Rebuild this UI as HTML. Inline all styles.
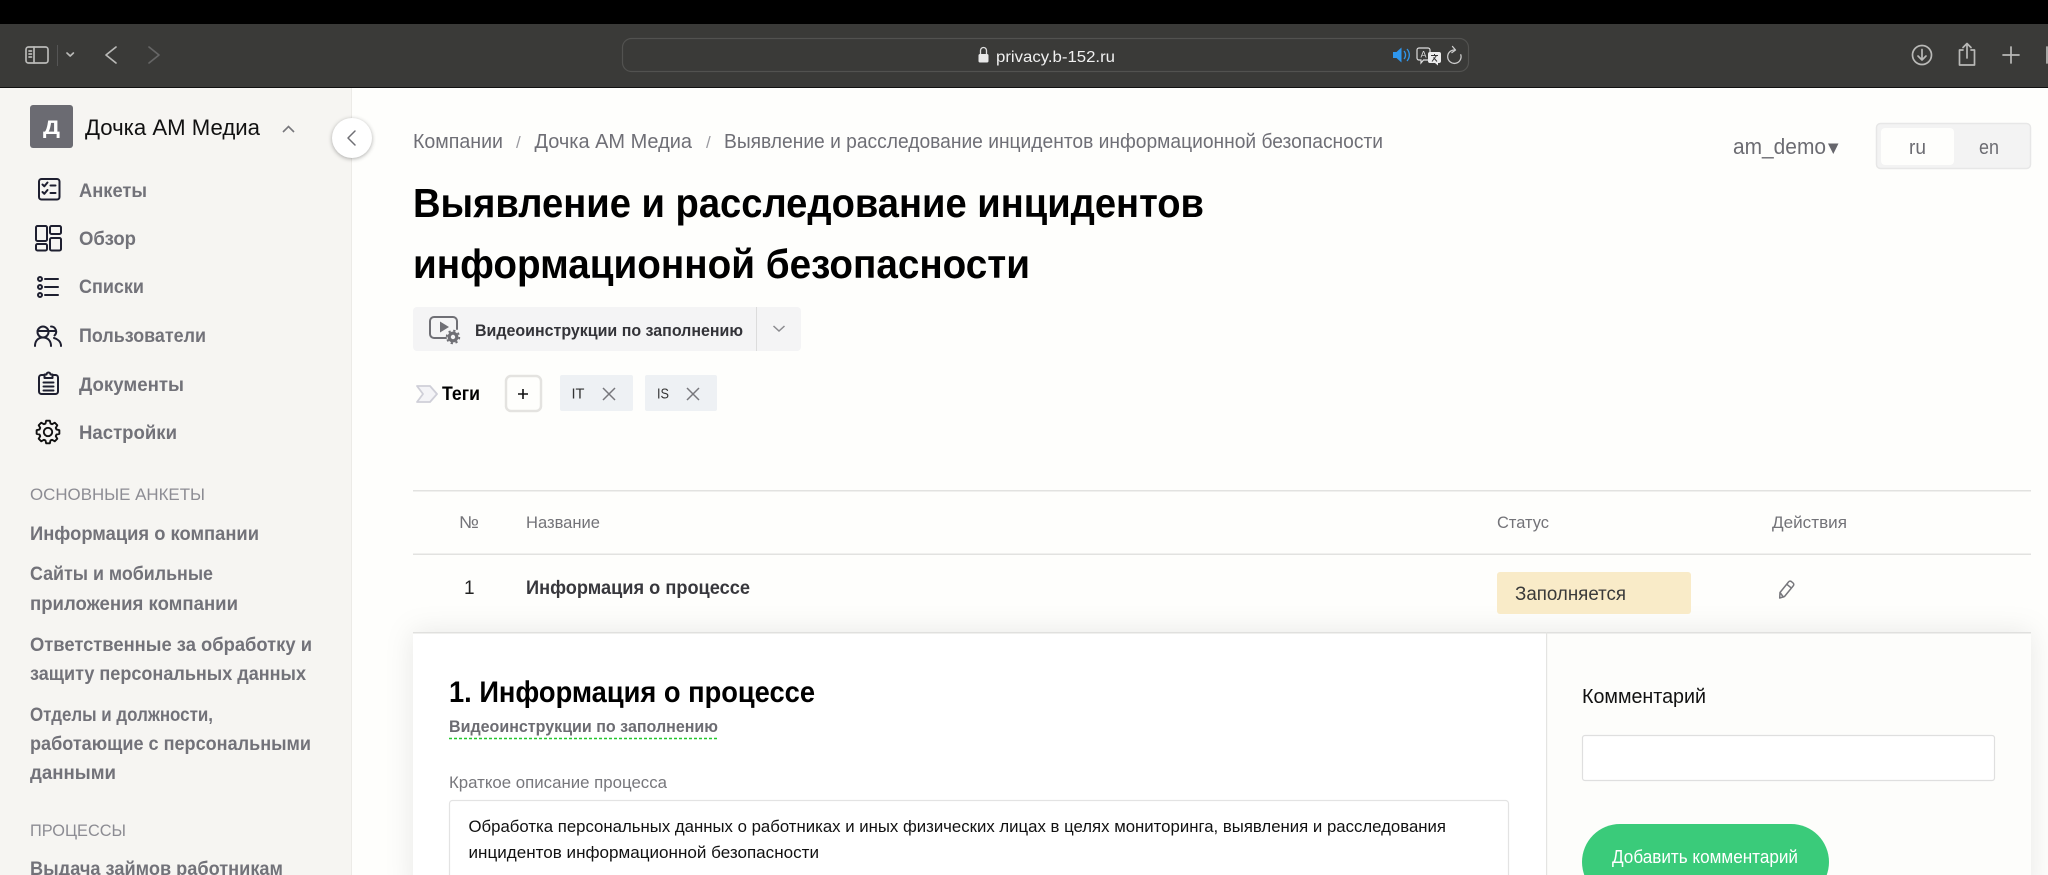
<!DOCTYPE html>
<html lang="ru">
<head>
<meta charset="utf-8">
<title>Выявление и расследование инцидентов информационной безопасности</title>
<style>
html,body{margin:0;padding:0;width:2048px;height:875px;overflow:hidden;background:#fefefc}
svg{display:block}
text{font-family:"Liberation Sans",sans-serif}
.nav{font-size:19px;font-weight:700;fill:#727279}
.side{font-size:19px;font-weight:700;fill:#727279}
.sec{font-size:17px;fill:#8c8c93}
.crumb{font-size:20px;fill:#6f6f76}
.h1{font-size:41px;font-weight:700;fill:#000}
.th{font-size:17px;fill:#737378}
.ic{fill:none;stroke:#1e1f30;stroke-width:2;stroke-linecap:round;stroke-linejoin:round}
.tb{fill:none;stroke:#b9b9b7;stroke-width:1.7;stroke-linecap:round;stroke-linejoin:round}
</style>
</head>
<body>
<svg width="2048" height="875" viewBox="0 0 2048 875" xmlns="http://www.w3.org/2000/svg">
  <rect width="2048" height="875" fill="#fefefc"/>

  <!-- browser chrome -->
  <rect width="2048" height="24" fill="#000"/>
  <rect y="24" width="2048" height="63" fill="#3a3a38"/>
  <rect y="87" width="2048" height="1" fill="#111"/>

  <rect x="26" y="47" width="22" height="16" rx="2.500" class="tb"/>
  <path d="M34 47V63M29 51h2.500M29 54h2.500M29 57h2.500" class="tb" stroke-width="1.200"/>
  <path d="M57.500 45V66" stroke="#555" stroke-width="1"/>
  <path d="M67 53l3.200 3 3.200-3" class="tb" stroke="#ddd" stroke-width="1.800"/>
  <path d="M116 47l-10 8 10 8" class="tb"/>
  <path d="M149 47l10 8-10 8" fill="none" stroke="#666" stroke-width="1.700" stroke-linecap="round" stroke-linejoin="round"/>

  <rect x="622.500" y="38.500" width="846" height="33" rx="9" fill="#3a3a38" stroke="#525250" stroke-width="1.200"/>
  <path d="M980.500 54v-3.500a3 3 0 0 1 6 0V54" fill="none" stroke="#ddd" stroke-width="1.300"/>
  <rect x="978.500" y="54" width="10" height="8.500" rx="1.500" fill="#e8e8e8"/>
  <text x="996" y="62" font-size="16" fill="#f0f0f0" textLength="119" lengthAdjust="spacingAndGlyphs">privacy.b-152.ru</text>
  <path d="M1393 52h3.500l5-4.500v15l-5-4.500H1393z" fill="#2f97ee"/>
  <path d="M1404 51a6 6 0 0 1 0 8M1407 49a9 9 0 0 1 0 12" fill="none" stroke="#2f97ee" stroke-width="1.300"/>

  <path d="M1419 48h9a2 2 0 0 1 2 2v8a2 2 0 0 1-2 2h-4.500l-2.500 3v-3h-2a2 2 0 0 1-2-2v-8a2 2 0 0 1 2-2z" fill="#3a3a38" stroke="#ddd" stroke-width="1.200"/>
  <text x="1420.500" y="57.500" font-size="9" fill="#ddd">A</text>
  <path d="M1430 52h9a2 2 0 0 1 2 2v7a2 2 0 0 1-2 2h-1v2.500l-3-2.500h-5a2 2 0 0 1-2-2v-7a2 2 0 0 1 2-2z" fill="#ececec"/>
  <path d="M1431 55.500h7M1434.500 54v1.500M1432 61.500l4.500-6M1433.500 57.500l3.500 4" stroke="#333" stroke-width="1" fill="none"/>

  <path d="M1454.500 50a6.700 6.700 0 1 0 6.300 4.800" fill="none" stroke="#ccc" stroke-width="1.300" stroke-linecap="round"/>
  <path d="M1452.500 46.500l3 3.500-3.600 2.600" fill="none" stroke="#ccc" stroke-width="1.300" stroke-linecap="round" stroke-linejoin="round"/>

  <circle cx="1922" cy="55" r="9.500" class="tb"/>
  <path d="M1922 49.500v10M1918 56l4 4 4-4" class="tb"/>
  <path d="M1963 50h-3.500v15h15V50H1971M1967 58V44M1963 47.500l4-4 4 4" class="tb"/>
  <path d="M2011 47v16M2003 55h16" class="tb"/>
  <path d="M2047 47v16" class="tb"/>

  <!-- sidebar -->
  <rect y="88" width="351" height="787" fill="#f6f5f2"/>
  <rect x="351" y="88" width="1" height="787" fill="#ecebe7"/>
  <rect x="30" y="105" width="43" height="43" rx="3" fill="#6b6b72"/>
  <text x="43" y="134" font-size="19" font-weight="700" fill="#fff" textLength="17" lengthAdjust="spacingAndGlyphs">Д</text>
  <text x="85" y="135" font-size="22" fill="#111" textLength="175" lengthAdjust="spacingAndGlyphs">Дочка АМ Медиа</text>
  <path d="M283 132l5.500-5.500 5.500 5.500" fill="none" stroke="#77777c" stroke-width="1.600"/>

  <circle cx="352" cy="138" r="20" fill="#fff" style="filter:drop-shadow(0 1.500px 2px rgba(0,0,0,.32))"/>
  <path d="M355 131l-7 7 7 7" fill="none" stroke="#6f6f75" stroke-width="1.500" stroke-linecap="round" stroke-linejoin="round"/>

  <!-- nav icons -->
  <rect x="39" y="179" width="20.500" height="20.500" rx="2.500" class="ic"/>
  <path d="M42.500 184.500l1.800 1.800 3.200-3.800M42.500 192l1.800 1.800 3.200-3.800M50.500 185.500h5M50.500 193h5" class="ic" stroke-width="1.500"/>

  <rect x="36" y="226" width="11" height="15" rx="1.500" class="ic"/>
  <rect x="50" y="226" width="11" height="8" rx="1.500" class="ic"/>
  <rect x="50" y="238" width="11" height="12.500" rx="1.500" class="ic"/>
  <rect x="36" y="244" width="11" height="6.500" rx="1.500" class="ic"/>

  <circle cx="40" cy="279" r="2" class="ic" stroke-width="1.500"/>
  <circle cx="40" cy="287" r="2" class="ic" stroke-width="1.500"/>
  <circle cx="40" cy="295" r="2" class="ic" stroke-width="1.500"/>
  <path d="M45 279h13M45 287h13M45 295h13" class="ic"/>

  <circle cx="43" cy="332" r="5.500" class="ic" stroke-width="1.800"/>
  <path d="M37.500 331h11M35 346c0-5.500 3.500-8.500 8-8.500s8 3 8 8.500" class="ic" stroke-width="1.800"/>
  <path d="M51 326.500a5.200 5.200 0 0 1 3.500 9M49.500 331h6M54 338c3.500 1 7 3.500 7 8" class="ic" stroke-width="1.800"/>

  <path d="M44.500 375h-3a2.500 2.500 0 0 0-2.500 2.500v14a2.500 2.500 0 0 0 2.500 2.500h14a2.500 2.500 0 0 0 2.500-2.500v-14a2.500 2.500 0 0 0-2.500-2.500h-3" class="ic"/>
  <path d="M44.500 378v-3.500h2a2 2 0 0 1 4 0h2v3.500z" class="ic" stroke-width="1.700"/>
  <path d="M43.500 382.500h10M43.500 386.500h10M43.500 390.500h10" class="ic" stroke-width="1.800"/>

  <g transform="translate(48 432)">
    <path d="M-2.570-8.420L-1.800-11.360 1.800-11.360 2.570-8.420 4.140-7.770 6.760-9.310 9.310-6.760 7.770-4.140 8.420-2.570 11.360-1.800 11.360 1.800 8.420 2.570 7.770 4.140 9.310 6.760 6.760 9.310 4.140 7.770 2.570 8.420 1.800 11.360-1.800 11.360-2.570 8.420-4.140 7.770-6.760 9.310-9.310 6.760-7.770 4.140-8.420 2.570-11.360 1.800-11.360-1.800-8.420-2.570-7.770-4.140-9.310-6.760-6.760-9.310-4.140-7.770Z" fill="none" stroke="#111" stroke-width="1.900" stroke-linejoin="round"/>
    <circle r="4.200" fill="none" stroke="#111" stroke-width="1.900"/>
  </g>

  <!-- nav text -->
  <text x="79" y="197" class="nav" textLength="68" lengthAdjust="spacingAndGlyphs">Анкеты</text>
  <text x="79" y="245" class="nav" textLength="57" lengthAdjust="spacingAndGlyphs">Обзор</text>
  <text x="79" y="293" class="nav" textLength="65" lengthAdjust="spacingAndGlyphs">Списки</text>
  <text x="79" y="342" class="nav" textLength="127" lengthAdjust="spacingAndGlyphs">Пользователи</text>
  <text x="79" y="391" class="nav" textLength="105" lengthAdjust="spacingAndGlyphs">Документы</text>
  <text x="79" y="439" class="nav" textLength="98" lengthAdjust="spacingAndGlyphs">Настройки</text>

  <text x="30" y="500" class="sec" textLength="175" lengthAdjust="spacingAndGlyphs">ОСНОВНЫЕ АНКЕТЫ</text>
  <text x="30" y="540" class="side" textLength="229" lengthAdjust="spacingAndGlyphs">Информация о компании</text>
  <text x="30" y="580" class="side" textLength="183" lengthAdjust="spacingAndGlyphs">Сайты и мобильные</text>
  <text x="30" y="610" class="side" textLength="208" lengthAdjust="spacingAndGlyphs">приложения компании</text>
  <text x="30" y="651" class="side" textLength="282" lengthAdjust="spacingAndGlyphs">Ответственные за обработку и</text>
  <text x="30" y="680" class="side" textLength="276" lengthAdjust="spacingAndGlyphs">защиту персональных данных</text>
  <text x="30" y="721" class="side" textLength="183" lengthAdjust="spacingAndGlyphs">Отделы и должности,</text>
  <text x="30" y="750" class="side" textLength="281" lengthAdjust="spacingAndGlyphs">работающие с персональными</text>
  <text x="30" y="779" class="side" textLength="86" lengthAdjust="spacingAndGlyphs">данными</text>
  <text x="30" y="836" class="sec" textLength="96" lengthAdjust="spacingAndGlyphs">ПРОЦЕССЫ</text>
  <text x="30" y="875" class="side" textLength="253" lengthAdjust="spacingAndGlyphs">Выдача займов работникам</text>

  <!-- header -->
  <text x="413" y="148" class="crumb" textLength="90" lengthAdjust="spacingAndGlyphs">Компании</text>
  <text x="516" y="148" font-size="17" fill="#9a9aa0">/</text>
  <text x="534.500" y="148" class="crumb" textLength="157.500" lengthAdjust="spacingAndGlyphs">Дочка АМ Медиа</text>
  <text x="706" y="148" font-size="17" fill="#9a9aa0">/</text>
  <text x="724" y="148" class="crumb" textLength="659" lengthAdjust="spacingAndGlyphs">Выявление и расследование инцидентов информационной безопасности</text>

  <text x="1733" y="154" font-size="22" fill="#6c6c72" textLength="93" lengthAdjust="spacingAndGlyphs">am_demo</text>
  <path d="M1828 143.500h10.500l-5.200 10.500z" fill="#66666c"/>
  <rect x="1876.500" y="123.500" width="154" height="45" rx="4" fill="#f3f3f3" stroke="#e7e7e7" stroke-width="1.500"/>
  <rect x="1881" y="128" width="73" height="37" rx="4" fill="#fefefc"/>
  <text x="1909" y="154" font-size="20" fill="#6c6c72" textLength="17" lengthAdjust="spacingAndGlyphs">ru</text>
  <text x="1979" y="154" font-size="20" fill="#6c6c72" textLength="20" lengthAdjust="spacingAndGlyphs">en</text>

  <text x="413" y="217" class="h1" textLength="791" lengthAdjust="spacingAndGlyphs">Выявление и расследование инцидентов</text>
  <text x="413" y="278" class="h1" textLength="617" lengthAdjust="spacingAndGlyphs">информационной безопасности</text>

  <!-- video button -->
  <rect x="413" y="307" width="388" height="44" rx="4" fill="#f4f4f5"/>
  <rect x="756" y="307" width="1" height="44" fill="#dcdcdc"/>
  <path d="M446 338h-12a4 4 0 0 1-4-4v-13a4 4 0 0 1 4-4h19a4 4 0 0 1 4 4v8" fill="none" stroke="#6f6f75" stroke-width="2" stroke-linecap="round" stroke-linejoin="round"/>
  <path d="M440 321.500l9 5.500-9 5.500z" fill="#6f6f75"/>
  <circle cx="453" cy="337" r="3.800" fill="none" stroke="#6f6f75" stroke-width="3.200"/>
  <circle cx="453" cy="337" r="6.300" fill="none" stroke="#6f6f75" stroke-width="1.800" stroke-dasharray="2.300 2.650"/>
  <text x="475" y="336" font-size="17" font-weight="700" fill="#333338" textLength="268" lengthAdjust="spacingAndGlyphs">Видеоинструкции по заполнению</text>
  <path d="M773.500 326l5.500 5 5.500-5" fill="none" stroke="#8a8a8e" stroke-width="1.500"/>

  <!-- tags -->
  <path d="M417 386h13l7 8-7 8h-13l6-8z" fill="#f4f4f7" stroke="#cfcfd8" stroke-width="1.800" stroke-linejoin="round"/>
  <text x="442" y="400" font-size="19" font-weight="700" fill="#000" textLength="38" lengthAdjust="spacingAndGlyphs">Теги</text>
  <rect x="506" y="376" width="35" height="35" rx="5" fill="#fefefc" stroke="#e4e3e0" stroke-width="2.500"/>
  <path d="M523 389v10M518 394h10" stroke="#111" stroke-width="1.600"/>
  <rect x="560" y="375" width="73" height="36" rx="2" fill="#eef1f4"/>
  <text x="571.500" y="398.500" font-size="15" fill="#333" textLength="13" lengthAdjust="spacingAndGlyphs">IT</text>
  <path d="M603 388l12 12M615 388l-12 12" stroke="#77777c" stroke-width="1.500"/>
  <rect x="645" y="375" width="72" height="36" rx="2" fill="#eef1f4"/>
  <text x="657" y="398.500" font-size="15" fill="#333" textLength="12" lengthAdjust="spacingAndGlyphs">IS</text>
  <path d="M687 388l12 12M699 388l-12 12" stroke="#77777c" stroke-width="1.500"/>

  <!-- table -->
  <rect x="413" y="490" width="1618" height="1.500" fill="#e2e2e0"/>
  <rect x="413" y="553.500" width="1618" height="1.500" fill="#e2e2e0"/>
  <text x="459" y="528" class="th" textLength="20" lengthAdjust="spacingAndGlyphs">№</text>
  <text x="526" y="528" class="th" textLength="74" lengthAdjust="spacingAndGlyphs">Название</text>
  <text x="1497" y="528" class="th" textLength="52" lengthAdjust="spacingAndGlyphs">Статус</text>
  <text x="1772" y="528" class="th" textLength="75" lengthAdjust="spacingAndGlyphs">Действия</text>
  <text x="464" y="594" font-size="19" fill="#222">1</text>
  <text x="526" y="594" font-size="19" font-weight="700" fill="#37373c" textLength="224" lengthAdjust="spacingAndGlyphs">Информация о процессе</text>

  <!-- panel -->
  <rect x="413" y="632" width="1618" height="260" fill="#fff" style="filter:drop-shadow(0 0 14px rgba(0,0,0,.09))"/>
  <rect x="1546" y="632" width="485" height="243" fill="#fdfdfb"/>
  <rect x="413" y="632" width="1618" height="1.500" fill="#e0e0de"/>
  <rect x="1546" y="632" width="1.200" height="243" fill="#e4e4e2"/>

  <rect x="1497" y="572" width="194" height="42" rx="3" fill="#f9ebc8"/>
  <text x="1515" y="600" font-size="19" fill="#3a3a3a" textLength="111" lengthAdjust="spacingAndGlyphs">Заполняется</text>
  <path d="M1780 592.500l8.500-10.500a2 2 0 0 1 3-.3l1.500 1.200a2 2 0 0 1 .2 3l-8.700 10.600-4.800 1.500zM1786.700 584.200l4.800 4M1780 592.500l3.700 5" fill="none" stroke="#77777c" stroke-width="1.500" stroke-linejoin="round"/>

  <text x="449" y="702" font-size="30" font-weight="700" fill="#000" textLength="366" lengthAdjust="spacingAndGlyphs">1. Информация о процессе</text>
  <text x="449" y="732" font-size="17" font-weight="700" fill="#6c6c72" textLength="269" lengthAdjust="spacingAndGlyphs">Видеоинструкции по заполнению</text>
  <path d="M449 738.500H718" stroke="#22c82e" stroke-width="1.600" stroke-dasharray="3 2"/>
  <text x="449" y="788" font-size="17" fill="#77777c" textLength="218" lengthAdjust="spacingAndGlyphs">Краткое описание процесса</text>
  <rect x="449.500" y="800.500" width="1059" height="90" rx="3" fill="#fff" stroke="#e3e3e3" stroke-width="1.200"/>
  <text x="468.500" y="832" font-size="17" fill="#111" textLength="977.500" lengthAdjust="spacingAndGlyphs">Обработка персональных данных о работниках и иных физических лицах в целях мониторинга, выявления и расследования</text>
  <text x="468.500" y="858" font-size="17" fill="#111" textLength="350.500" lengthAdjust="spacingAndGlyphs">инцидентов информационной безопасности</text>

  <text x="1582" y="703" font-size="20" fill="#111" textLength="124" lengthAdjust="spacingAndGlyphs">Комментарий</text>
  <rect x="1582.500" y="735.500" width="412" height="45" rx="2.500" fill="#fff" stroke="#dfdfdf" stroke-width="1.200"/>
  <rect x="1582" y="824" width="247" height="76" rx="38" fill="#3acb7a"/>
  <text x="1612" y="863" font-size="18" fill="#fff" textLength="186" lengthAdjust="spacingAndGlyphs">Добавить комментарий</text>
</svg>
</body>
</html>
